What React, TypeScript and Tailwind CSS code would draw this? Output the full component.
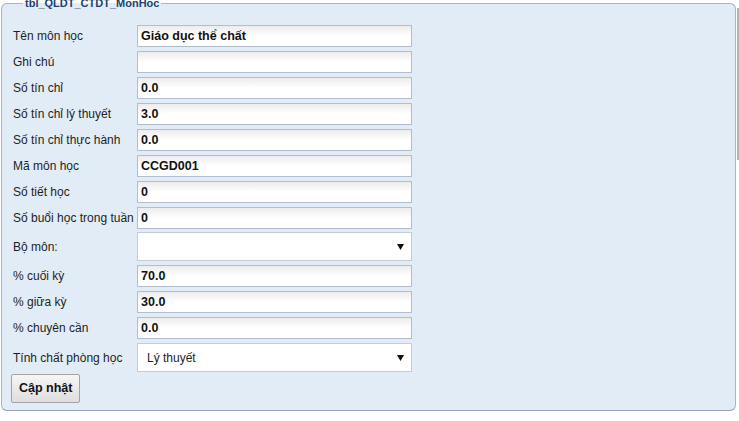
import React from "react";

const font = { fontFamily: '"Liberation Sans", Arial, sans-serif' };

function Row({ label, children }: { label: string; children: React.ReactNode }) {
  return (
    <div className="flex items-center">
      <div className="w-[124px] shrink-0 text-[12px] text-[#1e1e1e] whitespace-nowrap">{label}</div>
      {children}
    </div>
  );
}

function Input({ value }: { value: string }) {
  return (
    <div className="w-[275px] h-[22px] border border-[#b3bdcb] bg-gradient-to-b from-[#ececec] via-white to-white flex items-center pl-[3px] text-[12.5px] font-bold text-[#111]">
      {value}
    </div>
  );
}

function Select({ value }: { value: string }) {
  return (
    <div className="w-[275px] h-[29px] border border-[#c6ccd6] bg-white flex items-center justify-between pl-[9px] pr-[7px] text-[12px] text-[#1e1e1e]">
      <span>{value}</span>
      <svg width="7" height="6" viewBox="0 0 7 6">
        <path d="M0 0 H7 L3.5 6 Z" fill="#111" />
      </svg>
    </div>
  );
}

export default function App() {
  return (
    <div className="relative w-[739px] h-[421px] bg-white overflow-hidden" style={font}>
      <fieldset className="ml-[1px] -mt-[3px] w-[735px] border border-[#a9b4c8] border-b-[#97a3b9] rounded-[6px] bg-[#e2ecf6] pl-[11px] pb-[7px]">
        <legend className="ml-[10px] px-[2px] text-[11px] leading-[13px] font-bold text-[#233f73]">tbl_QLDT_CTDT_MonHoc</legend>
        <div className="flex flex-col gap-[4px] pt-[15px]">
          <Row label="Tên môn học"><Input value="Giáo dục thể chất" /></Row>
          <Row label="Ghi chú"><Input value="" /></Row>
          <Row label="Số tín chỉ"><Input value="0.0" /></Row>
          <Row label="Số tín chỉ lý thuyết"><Input value="3.0" /></Row>
          <Row label="Số tín chỉ thực hành"><Input value="0.0" /></Row>
          <Row label="Mã môn học"><Input value="CCGD001" /></Row>
          <Row label="Số tiết học"><Input value="0" /></Row>
          <Row label="Số buổi học trong tuần"><Input value="0" /></Row>
          <div className="-mt-[1px]">
            <Row label="Bộ môn:"><Select value="" /></Row>
          </div>
          <Row label="% cuối kỳ"><Input value="70.0" /></Row>
          <Row label="% giữa kỳ"><Input value="30.0" /></Row>
          <Row label="% chuyên cần"><Input value="0.0" /></Row>
          <Row label="Tính chất phòng học"><Select value="Lý thuyết" /></Row>
          <div className="-mt-[2px]">
            <button className="h-[29px] px-[7px] -ml-[2px] border border-[#a3a3a3] rounded-[2px] bg-gradient-to-b from-[#f6f6f6] to-[#dedede] text-[12.5px] font-bold text-[#111]">
              Cập nhật
            </button>
          </div>
        </div>
      </fieldset>
      <div className="absolute right-0 top-[8px] w-[2px] h-[152px] bg-[#b4b4b4]" />
    </div>
  );
}
